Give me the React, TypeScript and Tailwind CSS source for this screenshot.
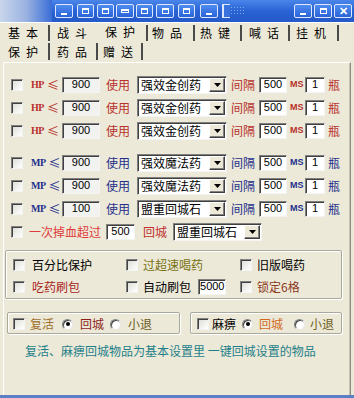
import React from 'react';

const sunken =
  'border border-t-[#808080] border-l-[#808080] border-r-[#f4f4f4] border-b-[#f4f4f4] shadow-[inset_1px_1px_0_#404040]';
const raised =
  'border border-t-white border-l-white border-r-[#404040] border-b-[#404040] shadow-[inset_-1px_-1px_0_#808080]';

function Check({ cls = '' }: { cls?: string }) {
  return <span className={'inline-block w-[12px] h-[12px] shrink-0 bg-gradient-to-br from-[#dcdcd4] to-white ' + sunken + ' ' + cls} />;
}

function Radio({ cls = '', on = false }: { cls?: string; on?: boolean }) {
  return (
    <span
      className={
        'relative inline-flex items-center justify-center w-[11px] h-[11px] shrink-0 rounded-full bg-white border border-t-[#808080] border-l-[#808080] border-r-[#e8e8e8] border-b-[#e8e8e8] shadow-[inset_1px_1px_0_#404040] ' +
        cls
      }
    >
      {on && <span className="w-[4px] h-[4px] rounded-full bg-black" />}
    </span>
  );
}

function Field({ cls, val, gray = false, left = false }: { cls: string; val: string; gray?: boolean; left?: boolean }) {
  return (
    <span
      className={
        'h-[16px] shrink-0 flex items-center text-[11px] leading-none text-black font-[\'Liberation_Sans\',sans-serif] ' +
        (gray ? 'bg-[#f2f2f0] ' : 'bg-white ') +
        (left ? 'justify-start pl-[1px] ' : 'justify-center ') +
        sunken +
        ' ' +
        cls
      }
    >
      {val}
    </span>
  );
}

function Select({ cls, val }: { cls: string; val: string }) {
  return (
    <span className={'h-[18px] shrink-0 flex items-center bg-white ' + sunken + ' ' + cls}>
      <span className="flex-1 pl-[3px] text-[12px] leading-none text-black whitespace-nowrap">{val}</span>
      <span className={'w-[16px] h-[14px] mr-[1px] bg-[#ECE9D8] flex items-center justify-center ' + raised}>
        <svg width="7" height="4" viewBox="0 0 7 4">
          <polygon points="0,0 7,0 3.5,4" fill="#000" />
        </svg>
      </span>
    </span>
  );
}

function PotRow({ kind, val, item, mt = '' }: { kind: 'HP' | 'MP'; val: string; item: string; mt?: string }) {
  const c = kind === 'HP' ? 'text-[#b8302c]' : 'text-[#1f2f8c]';
  return (
    <div className={'h-[23px] flex items-center ' + mt}>
      <Check cls="ml-[7px]" />
      <span className={'ml-[8px] w-[31px] shrink-0 flex items-center ' + c}>
        <span className="text-[10px] font-bold font-['Liberation_Serif',serif] leading-none tracking-[-0.5px]">{kind}</span>
        <span className="ml-[3px] text-[12px] leading-none">≤</span>
      </span>
      <Field cls="w-[38px]" val={val} gray />
      <span className={'ml-[6px] w-[24px] shrink-0 text-[12px] leading-none ' + c}>使用</span>
      <Select cls="ml-[7px] w-[90px]" val={item} />
      <span className={'ml-[4px] w-[24px] shrink-0 text-[12px] leading-none ' + c}>间隔</span>
      <Field cls="ml-[4px] w-[28px]" val="500" />
      <span className={'ml-[3px] w-[15px] shrink-0 text-[9px] font-bold leading-none font-[\'Liberation_Sans\',sans-serif] ' + c}>MS</span>
      <Field cls="w-[20px]" val="1" />
      <span className={'ml-[3px] text-[12px] leading-none ' + c}>瓶</span>
    </div>
  );
}

const titleBtns = [
  { cls: 'ml-[3px] w-[18px]', k: 'min' },
  { cls: 'ml-[4px] w-[17px]', k: 'box' },
  { cls: 'ml-[3px] w-[17px]', k: 'box' },
  { cls: 'ml-[2px] w-[18px]', k: 'flat' },
  { cls: 'ml-[2px] w-[17px]', k: 'box' },
  { cls: 'ml-[3px] w-[18px]', k: 'box' },
  { cls: 'ml-[4px] w-[17px]', k: 'box' },
  { cls: 'ml-[5px] w-[18px]', k: 'min' },
];

function Glyph({ k }: { k: string }) {
  if (k === 'min') return <span className="mt-[6px] w-[6px] h-[2px] bg-white" />;
  if (k === 'flat') return <span className="w-[8px] h-[4px] border border-white border-t-2" />;
  if (k === 'close')
    return <span className="text-white text-[11px] font-bold leading-none font-['Liberation_Sans',sans-serif]">✕</span>;
  return <span className="w-[7px] h-[6px] border border-white border-t-2" />;
}

function TitleBtn({ cls, k }: { cls: string; k: string }) {
  return (
    <span
      className={
        'h-[14px] shrink-0 rounded-[2px] border border-[#dfe8fb] bg-gradient-to-b from-[#4f8df0] to-[#2a62d8] flex items-center justify-center ' +
        cls
      }
    >
      <Glyph k={k} />
    </span>
  );
}

export default function App() {
  return (
    <div className="w-[354px] h-[398px] bg-[#ECE9D8] overflow-hidden flex flex-col font-['Noto_Sans_CJK_SC',sans-serif] text-[12px] text-black">
      {/* title bar */}
      <div className="h-[22px] shrink-0 flex items-center bg-gradient-to-b from-[#4a86ea] via-[#2a63d4] to-[#2459c8]">
        <span className="w-[52px] h-full shrink-0 bg-gradient-to-r from-[#c9d6ec] via-[#9bb3e0] to-[#3a6dd6]" />
        {titleBtns.map((b, i) => (
          <TitleBtn key={i} cls={b.cls} k={b.k} />
        ))}
        <span className="ml-[4px] w-[8px] h-[14px] shrink-0 border-l-2 border-t border-b border-[#dfe8fb] bg-[#3a72de]" />
        <span className="w-[14px] h-[10px] shrink-0 bg-[radial-gradient(#7fa8f0_1px,transparent_1px)] bg-[length:3px_3px]" />
        <span className="flex-1" />
        <TitleBtn cls="w-[18px]" k="min" />
        <TitleBtn cls="ml-[2px] w-[18px]" k="box" />
        <TitleBtn cls="ml-[2px] mr-[2px] w-[18px]" k="close" />
      </div>

      {/* tab row 1 */}
      <div className="h-[19px] shrink-0 flex items-end pl-[3px] border-t border-white">
        <div className="w-[47px] h-[16px] pl-[5px] flex items-center border-r-2 border-[#4a4a4a] gap-[6px]"><span>基</span><span>本</span></div>
        <div className="w-[48px] h-[16px] pl-[7px] flex items-center gap-[6px]"><span>战</span><span>斗</span></div>
        <div className="w-[50px] h-[16px] pl-[7px] flex items-center border-r-2 border-[#4a4a4a] gap-[6px]"><span className="relative -top-[1px]">保</span><span className="relative -top-[1px]">护</span></div>
        <div className="w-[47px] h-[16px] pl-[4px] flex items-center border-r-2 border-[#4a4a4a] gap-[6px]"><span>物</span><span>品</span></div>
        <div className="w-[47px] h-[16px] pl-[5px] flex items-center border-r-2 border-[#4a4a4a] gap-[6px]"><span>热</span><span>键</span></div>
        <div className="w-[48px] h-[16px] pl-[7px] flex items-center border-r-2 border-[#4a4a4a] gap-[6px]"><span>喊</span><span>话</span></div>
        <div className="w-[49px] h-[16px] pl-[6px] flex items-center border-r-2 border-[#4a4a4a] gap-[6px]"><span>挂</span><span>机</span></div>
      </div>

      {/* tab row 2 */}
      <div className="h-[21px] shrink-0 flex items-start pt-[2px] pl-[3px]">
        <div className="w-[47px] h-[17px] pl-[5px] flex items-center border-r-2 border-[#4a4a4a] gap-[6px]"><span>保</span><span>护</span></div>
        <div className="w-[48px] h-[17px] pl-[7px] flex items-center border-r-2 border-[#4a4a4a] gap-[6px]"><span>药</span><span>品</span></div>
        <div className="w-[45px] h-[17px] pl-[5px] flex items-center border-r-2 border-[#4a4a4a] gap-[6px]"><span>赠</span><span>送</span></div>
      </div>

      {/* panel */}
      <div className="ml-[3px] w-[348px] h-[333px] shrink-0 flex flex-col border-t border-l border-white border-r border-r-[#8a8a80] shadow-[inset_-1px_0_0_#c8c5b4]">
        <div className="pt-[10px]">
          <PotRow kind="HP" val="900" item="强效金创药" />
          <PotRow kind="HP" val="900" item="强效金创药" />
          <PotRow kind="HP" val="900" item="强效金创药" />
          <PotRow kind="MP" val="900" item="强效魔法药" mt="mt-[9px]" />
          <PotRow kind="MP" val="900" item="强效魔法药" />
          <PotRow kind="MP" val="100" item="盟重回城石" />
          <div className="h-[23px] flex items-center">
            <Check cls="ml-[7px]" />
            <span className="ml-[6px] w-[72px] shrink-0 text-[12px] leading-none text-[#e03a3a]">一次掉血超过</span>
            <Field cls="ml-[5px] w-[29px]" val="500" />
            <span className="ml-[8px] w-[24px] shrink-0 text-[12px] leading-none text-[#c0302c]">回城</span>
            <Select cls="ml-[6px] w-[89px]" val="盟重回城石" />
          </div>
        </div>

        {/* group 1 */}
        <div className="mt-[7px] ml-[1px] w-[337px] h-[49px] shrink-0 border border-[#a8a89c] rounded-[2px] shadow-[1px_1px_0_#fff,inset_1px_1px_0_#fff] pt-[5px] flex flex-col gap-[5px]">
          <div className="h-[17px] flex items-center">
            <div className="w-[120px] shrink-0 flex items-center">
              <Check cls="ml-[7px]" />
              <span className="ml-[7px] leading-none">百分比保护</span>
            </div>
            <div className="w-[114px] shrink-0 flex items-center">
              <Check />
              <span className="ml-[5px] leading-none text-[#777010]">过超速喝药</span>
            </div>
            <div className="flex items-center">
              <Check />
              <span className="ml-[5px] leading-none">旧版喝药</span>
            </div>
          </div>
          <div className="h-[17px] flex items-center">
            <div className="w-[120px] shrink-0 flex items-center">
              <Check cls="ml-[7px]" />
              <span className="ml-[7px] leading-none text-[#a8241c]">吃药刷包</span>
            </div>
            <div className="w-[114px] shrink-0 flex items-center">
              <Check />
              <span className="ml-[5px] leading-none">自动刷包</span>
              <Field cls="ml-[7px] w-[28px]" val="5000" left />
            </div>
            <div className="flex items-center">
              <Check />
              <span className="ml-[5px] leading-none text-[#8c3a24]">锁定6格</span>
            </div>
          </div>
        </div>

        {/* group 2 */}
        <div className="mt-[13px] flex">
          <div className="ml-[3px] w-[173px] h-[22px] shrink-0 border border-[#a8a89c] rounded-[2px] shadow-[1px_1px_0_#fff,inset_1px_1px_0_#fff] flex items-center pt-[2px]">
            <Check cls="ml-[5px]" />
            <span className="ml-[5px] leading-none text-[#a0702c]">复活</span>
            <Radio cls="ml-[8px]" on />
            <span className="ml-[7px] leading-none text-[#8c1e1a]">回城</span>
            <Radio cls="ml-[6px]" />
            <span className="ml-[7px] leading-none text-[#6e5a24]">小退</span>
          </div>
          <div className="ml-[10px] w-[152px] h-[22px] shrink-0 border border-[#a8a89c] rounded-[2px] shadow-[1px_1px_0_#fff,inset_1px_1px_0_#fff] flex items-center pt-[2px]">
            <Check cls="ml-[6px]" />
            <span className="ml-[3px] leading-none">麻痹</span>
            <Radio cls="ml-[6px]" on />
            <span className="ml-[6px] leading-none text-[#d2691e]">回城</span>
            <Radio cls="ml-[11px]" />
            <span className="ml-[5px] leading-none text-[#6e601c]">小退</span>
          </div>
        </div>

        <div className="mt-[10px] ml-[21px] leading-[14px] text-[#1e7f8a] whitespace-nowrap">
          复活、麻痹回城物品为基本设置里 一键回城设置的物品
        </div>
      </div>

      <div className="h-[3px] shrink-0 bg-[#5b7fc4]" />
    </div>
  );
}
